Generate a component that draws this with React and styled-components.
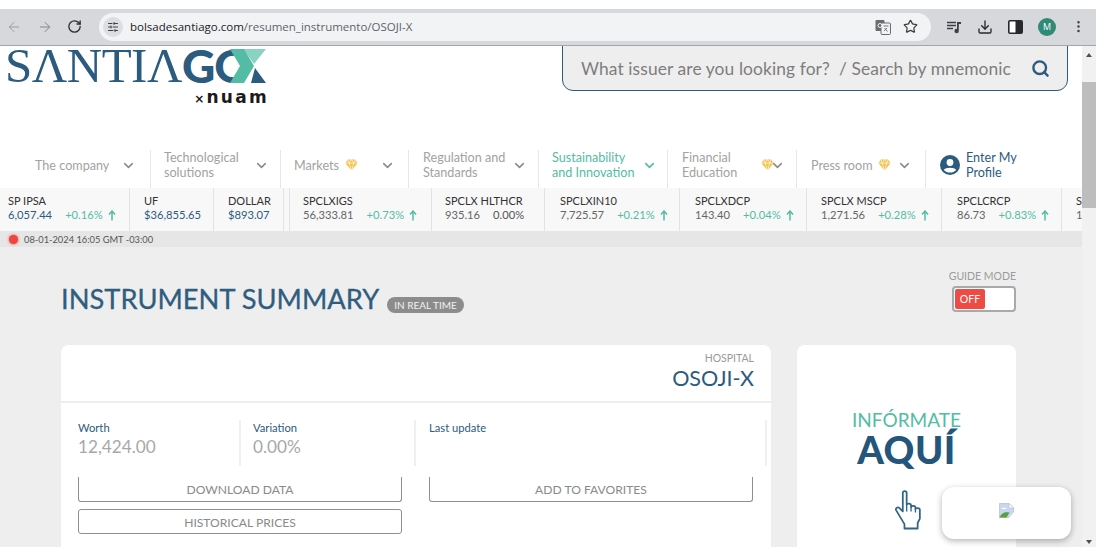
import styled, { createGlobalStyle } from "styled-components"
import { ChevronDown, ArrowLeft, ArrowRight, RotateCw, Star, Download, Search, MoreVertical, SlidersHorizontal } from "lucide-react"

const GlobalStyle = createGlobalStyle`
html, body {
  margin: 0;
  padding: 0;
  height: 556px;
  overflow: hidden;
  background: #fff;
  font-family: "Lato", "Liberation Sans", sans-serif;
}
* { box-sizing: border-box; }
`;

const Screen = styled.div`
width: 1096px;
height: 556px;
position: relative;
padding-top: 9px;
overflow: hidden;
background: #fff;
`;

const BrowserBar = styled.div`
height: 37px;
background: #d6d8dc;
border-bottom: 1px solid #a3a5a8;
display: flex;
align-items: center;
padding-bottom: 1px;
`;

const NavIcons = styled.div`
display: flex;
align-items: center;
width: 99px;
padding-left: 6px;
gap: 14.5px;
`;

const BarButton = styled.span`
display: flex;
width: 16px;
height: 16px;
color: ${(p) => p.$color || "#3c4043"};
`;

const Omnibox = styled.div`
width: 832px;
height: 28px;
background: #f1f3f5;
border-radius: 14px;
display: flex;
align-items: center;
padding: 0 12px 0 4px;
`;

const SiteChip = styled.span`
width: 20px;
height: 20px;
border-radius: 50%;
background: #dcdee2;
display: flex;
align-items: center;
justify-content: center;
color: #3c4043;
`;

const Url = styled.div`
flex: 1;
margin-left: 7px;
font-family: "Open Sans", sans-serif;
font-size: 11.5px;
color: #5f6368;
span { color: #202124; }
`;

const OmniIcons = styled.div`
display: flex;
align-items: center;
gap: 12px;
`;

const ToolIcons = styled.div`
display: flex;
align-items: center;
margin-left: 15px;
gap: 15px;
`;

const Avatar = styled.span`
width: 18px;
height: 18px;
border-radius: 50%;
background: #2f8a76;
color: #fff;
font-family: "Open Sans", sans-serif;
font-size: 9px;
display: flex;
align-items: center;
justify-content: center;
`;

const Viewport = styled.div`
height: 501px;
display: flex;
`;

const Page = styled.div`
width: 1082px;
height: 501px;
overflow: hidden;
background: #eee;
`;

const Scrollbar = styled.div`
width: 14px;
background: #f1f1f1;
position: relative;
display: flex;
flex-direction: column;
align-items: center;
justify-content: space-between;
padding: 7px 0 3px;
`;

const ScrollThumb = styled.div`
position: absolute;
left: 0;
right: 0;
top: 36px;
height: 126px;
background: #bdbdbd;
`;

const Arrow = styled.span`
width: 0;
height: 0;
border-left: 3px solid transparent;
border-right: 3px solid transparent;
${(p) => (p.$up ? "border-bottom: 4px solid #505050;" : "border-top: 4px solid #505050;")}
`;

const Header = styled.header`
height: 142px;
background: #fff;
display: flex;
flex-direction: column;
`;

const HeaderTop = styled.div`
height: 104px;
display: flex;
justify-content: space-between;
padding: 3px 14px 0 5px;
`;

const Logo = styled.div`
width: 262px;
display: flex;
flex-direction: column;
`;

const LogoLine = styled.div`
height: 34px;
display: flex;
align-items: center;
color: #2b5b7e;
white-space: nowrap;
`;

const LogoSerif = styled.span`
font-family: "Liberation Serif", serif;
font-size: 49px;
line-height: 34px;
letter-spacing: -0.5px;
`;

const LogoBold = styled.span`
font-family: "Lato", sans-serif;
font-weight: 900;
font-size: 46px;
line-height: 34px;
letter-spacing: -1px;
`;

const LogoMark = styled.svg`
width: 36px;
height: 34px;
margin-left: -21px;
flex: none;
`;

const LogoSub = styled.div`
margin-top: 5px;
text-align: right;
font-family: "DejaVu Sans", sans-serif;
font-size: 17px;
line-height: 18px;
font-weight: 700;
letter-spacing: 2.3px;
margin-right: -2px;
color: #1b1b1b;
small {
  font-size: 12px;
  letter-spacing: 0;
  margin-right: 2px;
}
`;

const SearchBox = styled.div`
width: 506px;
height: 46px;
margin-top: -4px;
background: #eee;
border: 1px solid #2b5b7e;
border-radius: 0 0 11px 11px;
display: flex;
align-items: center;
justify-content: space-between;
padding: 0 17px 0 18px;
font-size: 17.4px;
color: #7d7d7d;
letter-spacing: 0.1px;
white-space: nowrap;
`;

const Menu = styled.nav`
height: 38px;
display: flex;
`;

const MenuItem = styled.div`
width: ${(p) => p.$w}px;
padding-left: ${(p) => p.$pad || 13}px;
padding-right: ${(p) => p.$right ?? 11}px;
padding-bottom: 8px;
border-right: 1px solid #e6e6e6;
display: flex;
align-items: center;
justify-content: space-between;
font-size: 12.6px;
line-height: 15px;
color: ${(p) => (p.$active ? "#52bca4" : "#a2a2a2")};
svg.chev { color: ${(p) => (p.$active ? "#52bca4" : "#8a8a8a")}; flex: none; }
`;

const MenuLabel = styled.span`
display: flex;
align-items: center;
gap: ${(p) => p.$gap || 6}px;
margin-right: ${(p) => (p.$tight ? -4 : 0)}px;
`;

const ProfileItem = styled.div`
display: flex;
align-items: center;
gap: 6px;
padding: 0 0 8px 14px;
font-size: 12.6px;
line-height: 15px;
color: #2b5b7e;
`;

const Ticker = styled.div`
height: 43px;
background: #f8f8f8;
display: flex;
overflow: hidden;
`;

const TickerCell = styled.div`
flex: none;
width: ${(p) => p.$w}px;
padding-left: ${(p) => p.$pad ?? 14}px;
padding-top: 6px;
border-right: 1px solid ${(p) => (p.$last ? "transparent" : "#e3e3e3")};
white-space: nowrap;
`;

const TickerName = styled.div`
font-size: 11px;
line-height: 14px;
height: 14px;
color: #333;
`;

const TickerRow = styled.div`
display: flex;
font-size: 11.2px;
line-height: 14px;
color: ${(p) => (p.$blue ? "#2b5b7e" : "#666")};
`;

const TickerUp = styled.span`
color: #52bca4;
margin-left: 13px;
`;

const TickerFlat = styled.span`
color: #555;
margin-left: 13px;
`;

const StatusBar = styled.div`
height: 16px;
background: #e6e6e6;
display: flex;
align-items: center;
padding-left: 9px;
gap: 6px;
font-size: 9.3px;
color: #555;
`;

const LiveDot = styled.span`
width: 9px;
height: 9px;
border-radius: 50%;
background: #ee4540;
box-shadow: 0 0 3px #ee4540;
`;

const Main = styled.main`
padding: 23px 66px 0 61px;
`;

const TitleRow = styled.div`
height: 75px;
display: flex;
justify-content: space-between;
`;

const TitleGroup = styled.div`
display: flex;
align-items: center;
gap: 8px;
height: 58px;
`;

const Title = styled.h1`
margin: 0;
font-size: 27.3px;
line-height: 1;
font-weight: 400;
color: #2f5d80;
-webkit-text-stroke: 0.3px #2f5d80;
`;

const RealTime = styled.span`
margin-top: 12px;
height: 16px;
padding: 0 7px;
border-radius: 8px;
background: #8c8c8c;
color: #f2f2f2;
font-size: 10px;
line-height: 16px;
`;

const GuideMode = styled.div`
display: flex;
flex-direction: column;
align-items: flex-end;
gap: 4px;
font-size: 10.5px;
line-height: 12px;
color: #9b9b9b;
`;

const Toggle = styled.div`
width: 64px;
height: 26px;
border: 2px solid #a9a9a9;
border-radius: 4px;
background: #fff;
padding: 1px;
`;

const ToggleKnob = styled.div`
width: 30px;
height: 20px;
border-radius: 2px;
background: #ee4b45;
color: #fff;
font-size: 10.5px;
line-height: 20px;
text-align: center;
`;

const Cards = styled.div`
display: flex;
gap: 26px;
`;

const SummaryCard = styled.section`
width: 710px;
height: 202px;
background: #fff;
border-radius: 8px 8px 0 0;
`;

const SummaryHead = styled.div`
height: 58px;
border-bottom: 2px solid #eee;
padding: 7px 17px 0 0;
text-align: right;
`;

const Sector = styled.div`
font-size: 10.5px;
line-height: 13px;
color: #9a9a9a;
`;

const Mnemonic = styled.div`
font-size: 21.5px;
line-height: 26px;
color: #2b5b7e;
`;

const Stats = styled.div`
height: 52px;
margin-top: 17px;
padding-left: 17px;
display: flex;
overflow: hidden;
`;

const Stat = styled.div`
width: ${(p) => p.$w}px;
height: 46px;
border-right: 2px solid #f0f0f0;
padding: 1px 0 0 ${(p) => p.$pad || 0}px;
`;

const StatLabel = styled.div`
font-size: 11.2px;
line-height: 14px;
color: #2b5b7e;
`;

const StatValue = styled.div`
margin-top: 1px;
font-size: 17.2px;
line-height: 22px;
height: 19px;
overflow: hidden;
color: #a8a8a8;
`;

const Buttons = styled.div`
display: grid;
grid-template-columns: 324px 324px;
column-gap: 27px;
row-gap: 7px;
padding-left: 17px;
margin-top: 5px;
`;

const OutlineButton = styled.button`
height: 25px;
border: 1px solid #8f8f8f;
${(p) => p.$cut && "border-top: none;"}
border-radius: ${(p) => (p.$cut ? "0 0 3px 3px" : "3px")};
background: #fff;
font-family: "Lato", sans-serif;
font-size: 12.1px;
color: #8a8a8a;
padding: 1px 0 0;
`;

const PromoCard = styled.aside`
width: 219px;
height: 202px;
background: #fff;
border-radius: 8px 8px 0 0;
display: flex;
flex-direction: column;
align-items: center;
padding-top: 65px;
`;

const PromoTop = styled.div`
font-size: 19px;
line-height: 20px;
color: #52bca4;
`;

const PromoMain = styled.div`
font-size: 38px;
line-height: 38px;
letter-spacing: 0.5px;
font-weight: 900;
color: #24557a;
`;

const HandIcon = styled.svg`
width: 33px;
height: 44px;
margin-top: 22px;
margin-left: 8px;
`;

const FloatCard = styled.div`
position: absolute;
left: 942px;
top: 487px;
width: 129px;
height: 52px;
padding-bottom: 6px;
background: #fff;
border-radius: 12px;
box-shadow: 0 2px 6px rgba(0, 0, 0, 0.3);
display: flex;
align-items: center;
justify-content: center;
`;

const menu = [
  { w: 151, label: "The company", pad: 35, right: 14 },
  { w: 130, label: ["Technological", "solutions"] },
  { w: 128, label: "Markets", gem: true, right: 13 },
  { w: 130, label: ["Regulation and", "Standards"], pad: 14 },
  { w: 129, label: ["Sustainability", "and Innovation"], active: true, right: 10 },
  { w: 129, label: ["Financial", "Education"], gem: true, pad: 14, gap: 24, tight: true },
  { w: 129, label: "Press room", gem: true, pad: 14, right: 13, gap: 5 },
];

const ticker = [
  { w: 130, pad: 8, name: "SP IPSA", value: "6,057.44", up: "+0.16%", blue: true },
  { w: 84, name: "UF", value: "$36,855.65", blue: true },
  { w: 70, name: "DOLLAR", value: "$893.07", blue: true },
  { w: 6, pad: 0, name: "", value: "" },
  { w: 142, pad: 13, name: "SPCLXIGS", value: "56,333.81", up: "+0.73%" },
  { w: 113, pad: 13, name: "SPCLX HLTHCR", value: "935.16", flat: "0.00%" },
  { w: 135, pad: 15, name: "SPCLXIN10", value: "7,725.57", up: "+0.21%" },
  { w: 127, pad: 15, name: "SPCLXDCP", value: "143.40", up: "+0.04%" },
  { w: 135, name: "SPCLX MSCP", value: "1,271.56", up: "+0.28%" },
  { w: 120, pad: 15, name: "SPCLCRCP", value: "86.73", up: "+0.83%" },
  { w: 40, name: "SPCLX", value: "1,000.00", last: true },
];

const Gem = () => (
  <svg width="13" height="12" viewBox="0 0 14 13">
    <path d="M3 0.5h8l2.5 4L7 12.5 0.5 4.5z" fill="#f5c04a" />
    <path d="M0.5 4.5h13M4.5 4.5L7 12.5l2.5-8M3 0.5l1.5 4L7 0.5l2.5 4 1.5-4" stroke="#fff" strokeWidth="0.7" fill="none" />
  </svg>
);

const UpArrow = () => (
  <svg width="8" height="11" viewBox="0 0 8 11" style={{ marginLeft: 5, marginTop: 2 }}>
    <path d="M4 10.5V1.5M1 4.5l3-3.5 3 3.5" stroke="#52bca4" strokeWidth="1.5" fill="none" />
  </svg>
);

const TranslateIcon = () => (
  <svg width="16" height="16" viewBox="0 0 16 16">
    <rect x="0.5" y="1" width="9" height="11" rx="1" fill="#6a6d70" />
    <rect x="6" y="4" width="9.5" height="11.5" rx="1" fill="#f1f3f5" stroke="#6a6d70" />
    <circle cx="5" cy="6.5" r="2" fill="none" stroke="#f1f3f5" />
    <path d="M8.5 7h5M12 9l-3 3M9.5 9l3 3.5" stroke="#6a6d70" strokeWidth="0.9" fill="none" />
  </svg>
);

const PlaylistIcon = () => (
  <svg width="16" height="16" viewBox="0 0 16 16">
    <path d="M1 3.5h9M1 6.5h9M1 9.5h6" stroke="#3c4043" strokeWidth="1.5" />
    <path d="M11 3h4v2h-2.2v7a2.2 2.2 0 1 1-1.8-2.1z" fill="#3c4043" />
  </svg>
);

const SidePanelIcon = () => (
  <svg width="15" height="14" viewBox="0 0 15 14">
    <rect x="0.8" y="0.8" width="13.4" height="12.4" rx="1.2" fill="#fff" stroke="#26282b" strokeWidth="1.6" />
    <rect x="7.5" y="1" width="6.5" height="12" fill="#26282b" />
  </svg>
);

const BrokenImage = () => (
  <svg width="15" height="15" viewBox="0 0 15 15">
    <path d="M0.5 0.5H10L14.5 5V14.5H0.5z" fill="#c8d6ef" stroke="#b4b4b4" strokeWidth="0.6" />
    <path d="M2 6c2-2 4-2 6 0z" fill="#fff" />
    <path d="M0.5 14.5c2-5 6-6 10-5l-3 5z" fill="#56a13d" />
    <path d="M10 0.5L14.5 5 10 5z" fill="#fff" stroke="#b4b4b4" strokeWidth="0.5" />
    <path d="M15 9L10 15h5z" fill="#fff" />
  </svg>
);

const App = () => (
  <Screen>
    <GlobalStyle />
    <BrowserBar>
      <NavIcons>
        <BarButton $color="#9a9da1"><ArrowLeft size={16} strokeWidth={1.5} /></BarButton>
        <BarButton $color="#85888c"><ArrowRight size={16} strokeWidth={1.5} /></BarButton>
        <BarButton $color="#2f3134"><RotateCw size={15} strokeWidth={2.2} /></BarButton>
      </NavIcons>
      <Omnibox>
        <SiteChip><SlidersHorizontal size={12} strokeWidth={2} /></SiteChip>
        <Url><span>bolsadesantiago.com</span>/resumen_instrumento/OSOJI-X</Url>
        <OmniIcons>
          <TranslateIcon />
          <BarButton $color="#3c4043"><Star size={15} strokeWidth={2} /></BarButton>
        </OmniIcons>
      </Omnibox>
      <ToolIcons>
        <PlaylistIcon />
        <BarButton $color="#26282b"><Download size={16} strokeWidth={2} /></BarButton>
        <SidePanelIcon />
        <Avatar>M</Avatar>
        <BarButton $color="#3c4043"><MoreVertical size={15} strokeWidth={2} /></BarButton>
      </ToolIcons>
    </BrowserBar>
    <Viewport>
      <Page>
        <Header>
          <HeaderTop>
            <Logo>
              <LogoLine>
                <LogoSerif>SΛNTIΛ</LogoSerif>
                <LogoBold>GO</LogoBold>
                <LogoMark viewBox="0 0 36 34">
                  <polygon points="13,0 36,0 24,15 19,8" fill="#8ad3c2" />
                  <polygon points="0,0 14,0 24,17 14,34 0,34 10,17" fill="#52bca4" />
                  <polygon points="25,19 36,34 21,34" fill="#2b5b7e" />
                </LogoMark>
              </LogoLine>
              <LogoSub><small>×</small>nuam</LogoSub>
            </Logo>
            <SearchBox>
              What issuer are you looking for?&nbsp; / Search by mnemonic
              <Search size={19} strokeWidth={3} color="#2b5b7e" />
            </SearchBox>
          </HeaderTop>
          <Menu>
            {menu.map((item, i) => (
              <MenuItem key={i} $w={item.w} $pad={item.pad} $right={item.right} $active={item.active}>
                <MenuLabel $gap={item.gap} $tight={item.tight}>
                  <span>
                    {Array.isArray(item.label)
                      ? item.label.map((l) => <div key={l}>{l}</div>)
                      : item.label}
                  </span>
                  {item.gem && <Gem />}
                </MenuLabel>
                <ChevronDown className="chev" size={15} strokeWidth={2.5} />
              </MenuItem>
            ))}
            <ProfileItem>
              <svg width="20" height="20" viewBox="0 0 20 20">
                <circle cx="10" cy="10" r="10" fill="#2b5b7e" />
                <circle cx="10" cy="7.5" r="3.4" fill="#fff" />
                <path d="M3.8 15c1.5-3 10.9-3 12.4 0-3 3.4-9.4 3.4-12.4 0z" fill="#fff" />
              </svg>
              <span>Enter My<br />Profile</span>
            </ProfileItem>
          </Menu>
        </Header>
        <Ticker>
          {ticker.map((t, i) => (
            <TickerCell key={i} $w={t.w} $pad={t.pad} $last={t.last}>
              <TickerName>{t.name}</TickerName>
              <TickerRow $blue={t.blue}>
                {t.value}
                {t.up && <TickerUp>{t.up}</TickerUp>}
                {t.up && <UpArrow />}
                {t.flat && <TickerFlat>{t.flat}</TickerFlat>}
              </TickerRow>
            </TickerCell>
          ))}
        </Ticker>
        <StatusBar>
          <LiveDot />
          08-01-2024 16:05 GMT -03:00
        </StatusBar>
        <Main>
          <TitleRow>
            <TitleGroup>
              <Title>INSTRUMENT SUMMARY</Title>
              <RealTime>IN REAL TIME</RealTime>
            </TitleGroup>
            <GuideMode>
              GUIDE MODE
              <Toggle><ToggleKnob>OFF</ToggleKnob></Toggle>
            </GuideMode>
          </TitleRow>
          <Cards>
            <SummaryCard>
              <SummaryHead>
                <Sector>HOSPITAL</Sector>
                <Mnemonic>OSOJI-X</Mnemonic>
              </SummaryHead>
              <Stats>
                <Stat $w={163}>
                  <StatLabel>Worth</StatLabel>
                  <StatValue>12,424.00</StatValue>
                </Stat>
                <Stat $w={175} $pad={12}>
                  <StatLabel>Variation</StatLabel>
                  <StatValue>0.00%</StatValue>
                </Stat>
                <Stat $w={351} $pad={13}>
                  <StatLabel>Last update</StatLabel>
                </Stat>
              </Stats>
              <Buttons>
                <OutlineButton $cut>DOWNLOAD DATA</OutlineButton>
                <OutlineButton $cut>ADD TO FAVORITES</OutlineButton>
                <OutlineButton>HISTORICAL PRICES</OutlineButton>
              </Buttons>
            </SummaryCard>
            <PromoCard>
              <PromoTop>INFÓRMATE</PromoTop>
              <PromoMain>AQUÍ</PromoMain>
              <HandIcon viewBox="0 0 30 40">
                <path
                  d="M8 2.5c0-2 3.5-2 3.5 0v11c0-1.5 4-1.5 4 0.5v1.5c0-1.5 4-1.5 4 0.5v1.5c0-1.5 4-1.5 4 0.5v8l-2 4v5H9.5v-4L2 18.5c-1-2 1.5-3.5 3-2l3 3z"
                  fill="#fff"
                  stroke="#2f6589"
                  strokeWidth="1.6"
                  strokeLinejoin="round"
                />
                <path d="M11.5 13.5v6M15.5 15.5v4M19.5 17.5v3" stroke="#2f6589" strokeWidth="1.2" />
              </HandIcon>
            </PromoCard>
          </Cards>
        </Main>
      </Page>
      <Scrollbar>
        <Arrow $up />
        <ScrollThumb />
        <Arrow />
      </Scrollbar>
    </Viewport>
    <FloatCard><BrokenImage /></FloatCard>
  </Screen>
)

export default App
